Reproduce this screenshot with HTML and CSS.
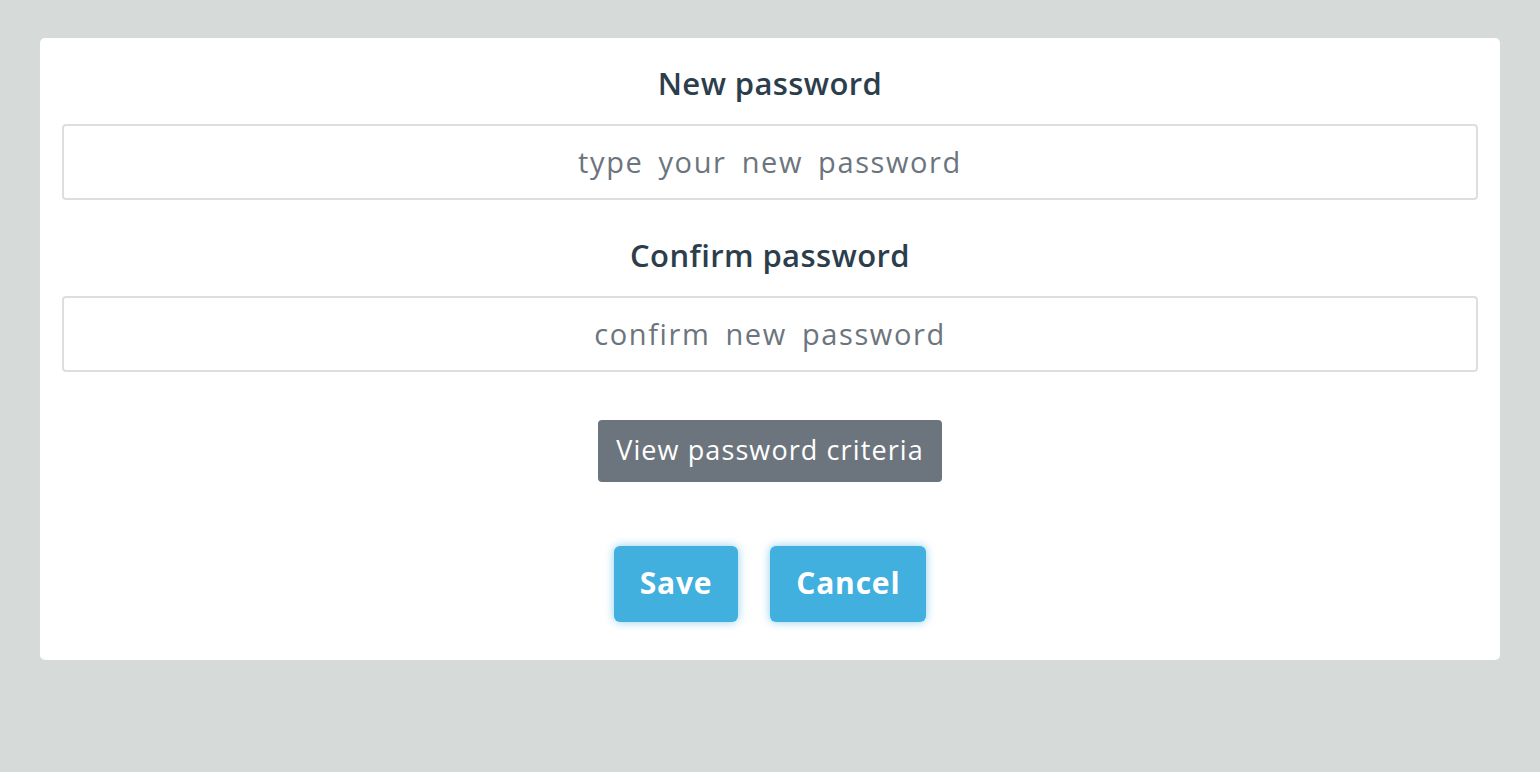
FILE: index.html
```html
<!DOCTYPE html>
<html>
<head>
<meta charset="utf-8">
<link rel="stylesheet" href="styles.css">
</head>
<body>
<div class="card">
  <div class="group">
    <label class="label">New password</label>
    <input class="input" type="password" placeholder="type your new password">
  </div>
  <div class="group">
    <label class="label">Confirm password</label>
    <input class="input" type="password" placeholder="confirm new password">
  </div>
  <div class="criteria-row">
    <button class="btn-criteria">View password criteria</button>
  </div>
  <div class="actions">
    <button class="btn-primary">Save</button>
    <button class="btn-primary">Cancel</button>
  </div>
</div>
</body>
</html>
```
FILE: styles.css
```css
html, body {
  margin: 0;
  padding: 0;
  background: #d6dbda;
  font-family: "Open Sans", "Liberation Sans", sans-serif;
}
body {
  padding: 38px 40px 0 40px;
  height: 772px;
  box-sizing: border-box;
}
.card {
  background: #fff;
  border-radius: 5px;
  padding: 25px 22px 38px 22px;
}
.group {
  display: flex;
  flex-direction: column;
  align-items: stretch;
}
.group + .group {
  margin-top: 35px;
}
.label {
  display: block;
  text-align: center;
  font-weight: 600;
  font-size: 31px;
  line-height: 40px;
  letter-spacing: 0.4px;
  color: #2c3e4c;
  margin-bottom: 21px;
}
.input {
  display: block;
  box-sizing: border-box;
  width: 100%;
  height: 76px;
  border: 2px solid #dcdedf;
  border-radius: 4px;
  text-align: center;
  font-family: inherit;
  font-size: 29px;
  letter-spacing: 1.6px;
  word-spacing: 6px;
  color: #6c757d;
  outline: none;
  padding: 0 12px 2px 12px;
}
.input::placeholder {
  color: #6c757d;
}
.criteria-row {
  display: flex;
  justify-content: center;
  margin-top: 48px;
}
.btn-criteria {
  background: #6c757d;
  color: #fff;
  border: none;
  border-radius: 4px;
  height: 62px;
  padding: 0 18px 3px 18px;
  font-family: inherit;
  font-size: 27px;
  letter-spacing: 1.1px;
}
.actions {
  display: flex;
  justify-content: center;
  gap: 32px;
  margin-top: 64px;
}
.btn-primary {
  background: #41b0de;
  color: #fff;
  border: none;
  border-radius: 6px;
  height: 76px;
  padding: 0 26px 3px 26px;
  font-family: inherit;
  font-weight: 700;
  font-size: 30px;
  letter-spacing: 0.8px;
  box-shadow: 0 0 10px rgba(65, 176, 222, 0.6);
}
```
